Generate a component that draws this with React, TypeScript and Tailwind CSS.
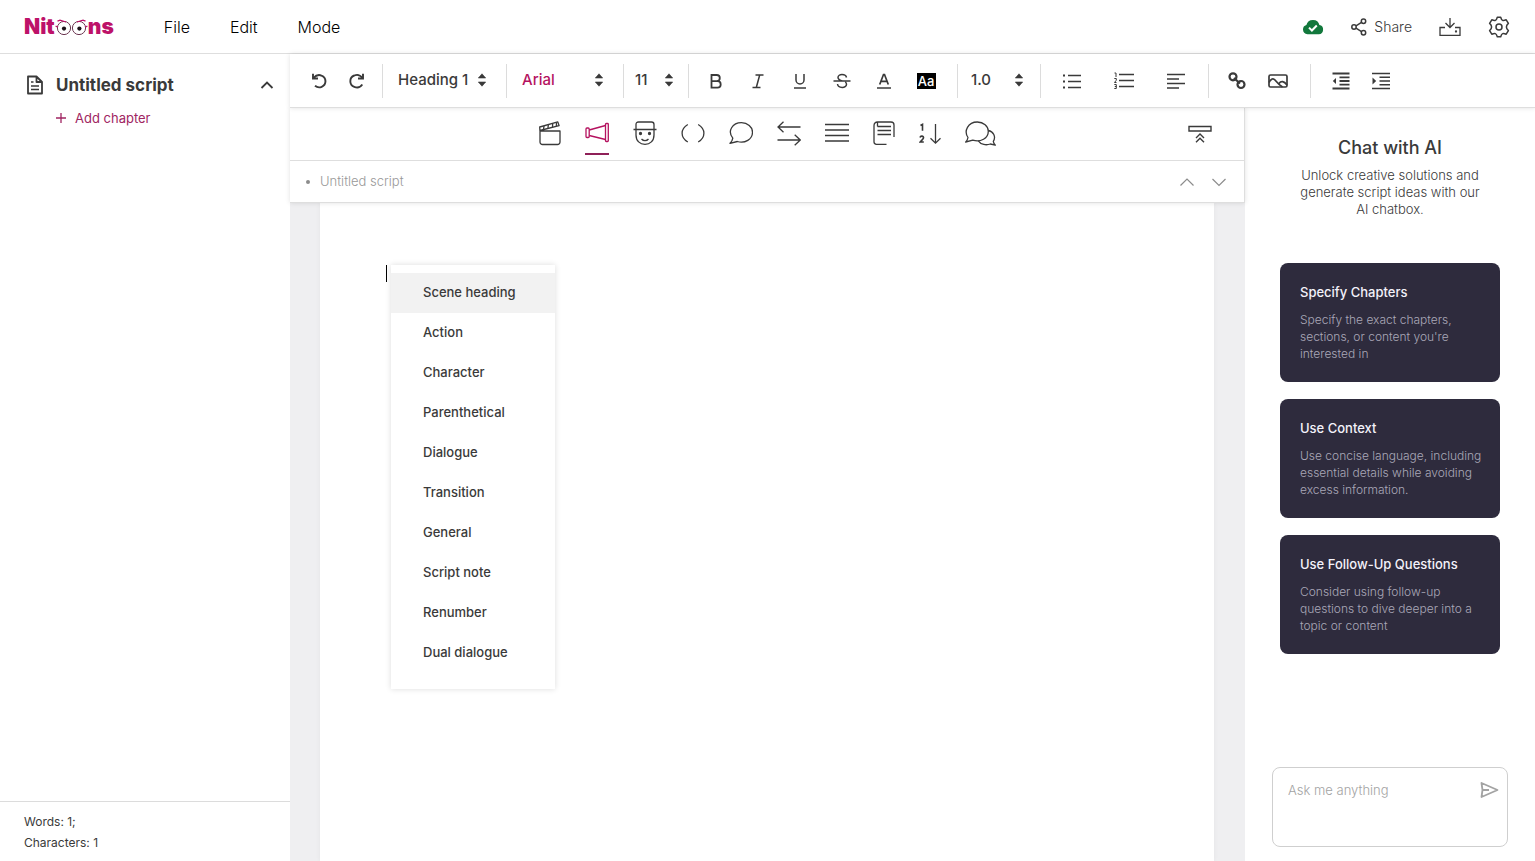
import React, { useState } from 'react';

interface IconProps {
    w: number;
    h: number;
    stroke?: number;
    children: React.ReactNode;
}

const Icon: React.FC<IconProps> = ({ w, h, stroke = 1.5, children }) => (
    <svg
        width={w}
        height={h}
        viewBox={`0 0 ${w} ${h}`}
        fill="none"
        stroke="currentColor"
        strokeWidth={stroke}
        className="shrink-0"
        aria-hidden="true"
    >
        {children}
    </svg>
);

const Logo: React.FC = () => (
    <a href="#" aria-label="Nitoons" className="flex items-center text-[21px] leading-6 font-black text-[#bd1269]">
        <span>Nit</span>
        <svg width="33" height="18" viewBox="0 0 33 18" fill="none" aria-hidden="true">
            <circle cx="9" cy="10" r="6.6" fill="#fff" stroke="#6b3550" strokeWidth="1" />
            <circle cx="24" cy="10" r="6.6" fill="#fff" stroke="#6b3550" strokeWidth="1" />
            <circle cx="9" cy="10.6" r="2.1" fill="#1c1118" />
            <circle cx="24.4" cy="10.6" r="2.1" fill="#1c1118" />
            <path d="M2.5 3.2 5 2.2l6 1.8M22 4l6-1.8 2.500 1M.6 8l2.200 1.200M32.400 8l-2.200 1.200" stroke="#bd1269" strokeWidth="1.3" />
        </svg>
        <span>ns</span>
    </a>
);

interface PickerProps {
    label: string;
    value: string;
    options: string[];
    className: string;
    arrows: string;
}

const Picker: React.FC<PickerProps> = ({ label, value, options, className, arrows }) => (
    <div className="relative h-[34px] border-r border-[#dcdcdc]">
        <select
            aria-label={label}
            defaultValue={value}
            className={`h-[34px] appearance-none bg-transparent text-[15px] font-medium outline-none ${className}`}
        >
            {options.map((option) => (
                <option key={option}>{option}</option>
            ))}
        </select>
        <svg
            width="10"
            height="14"
            viewBox="0 0 10 14"
            fill="currentColor"
            className={`pointer-events-none absolute top-[9px] ${arrows}`}
            aria-hidden="true"
        >
            <path d="M5 .8 8.7 5H1.3ZM5 13.2 8.7 9H1.3Z" stroke="currentColor" strokeWidth=".6" strokeLinejoin="round" />
        </svg>
    </div>
);

interface ToolProps {
    label: string;
    className: string;
    children: React.ReactNode;
}

const Tool: React.FC<ToolProps> = ({ label, className, children }) => (
    <button type="button" aria-label={label} className={`flex h-[34px] items-center justify-center ${className}`}>
        {children}
    </button>
);

const Header: React.FC = () => (
    <header className="flex h-[54px] shrink-0 items-center justify-between border-b border-[#dedede] pr-[25px] pl-6">
        <div className="flex items-center">
            <Logo />
            <nav className="ml-[50px] flex gap-10 text-base font-light text-black">
                <button type="button">File</button>
                <button type="button">Edit</button>
                <button type="button">Mode</button>
            </nav>
        </div>
        <div className="flex items-center gap-[27px]">
            <svg width="22" height="16" viewBox="0 0 22 16" role="img" aria-label="Saved">
                <path
                    d="M5.5 15.2A4.8 4.8 0 0 1 1 10.6a4.6 4.6 0 0 1 3.4-4.5A6.7 6.7 0 0 1 11 .9a6.5 6.5 0 0 1 6.4 5.2 4.6 4.6 0 0 1-.6 9.1Z"
                    fill="#12783c"
                />
                <path d="m7 8.6 2.9 2.9 4.9-5" fill="none" stroke="#fff" strokeWidth="2" />
            </svg>
            <button type="button" className="flex items-center gap-[7px] text-sm font-light">
                <Icon w={16} h={18}>
                    <circle cx="12.5" cy="3.2" r="2.2" />
                    <circle cx="3" cy="9" r="2.2" />
                    <circle cx="12.5" cy="14.8" r="2.2" />
                    <path d="m5 7.8 5.5-3.4M5 10.2l5.5 3.4" />
                </Icon>
                Share
            </button>
            <button type="button" aria-label="Download">
                <Icon w={22} h={20} stroke={1.3}>
                    <path d="M11 1v9.5M6.5 6 11 10.5 15.500 6M6 10.5H1v7.8h20v-7.8h-5" />
                    <circle cx="17" cy="14.5" r=".5" fill="currentColor" />
                </Icon>
            </button>
            <button type="button" aria-label="Settings">
                <Icon w={22} h={22} stroke={1.5}>
                    <path
                        d="M9.300 1.200h3.400q.8 2.800 1.900 3.200 1.100.5 3.600-.6l2.200 3.600q-2 1.600-2 3.600t2 3.600l-2.200 3.600q-2.500-1.100-3.600-.6-1.100.4-1.900 3.200H9.300q-.8-2.800-1.900-3.200-1.100-.5-3.600.6l-2.200-3.600q2-1.600 2-3.600t-2-3.600l2.200-3.600q2.500 1.100 3.600.6 1.100-.4 1.900-3.200Z"
                        strokeLinejoin="round"
                    />
                    <circle cx="11" cy="11" r="3" />
                </Icon>
            </button>
        </div>
    </header>
);

const Sidebar: React.FC = () => (
    <aside className="flex w-[290px] shrink-0 flex-col">
        <div className="flex items-center pt-[19px] pr-4 pl-[27px]">
            <Icon w={16} h={20} stroke={1.8}>
                <path d="M1 1.5h8.5L15 7v11.5H1ZM9.500 1.5V7H15" strokeLinejoin="round" />
                <path d="M4 7h2.5M4 11h8M4 14.5h8" strokeWidth="1.5" />
            </Icon>
            <h2 className="ml-[13px] text-[17px] leading-6 font-bold">Untitled script</h2>
            <button type="button" aria-label="Collapse script" className="ml-auto">
                <Icon w={14} h={10} stroke={1.8}>
                    <path d="m1.5 8 5.5-5.5L12.5 8" />
                </Icon>
            </button>
        </div>
        <button type="button" className="mt-[11px] ml-14 flex items-center gap-[9px] self-start text-[13px] leading-5 text-[#a02562]">
            <Icon w={10} h={10} stroke={1.3}>
                <path d="M5 0v10M0 5h10" />
            </Icon>
            Add chapter
        </button>
        <div className="mt-auto border-t border-[#dcdcdc] pt-[9px] pb-2 pl-6 text-xs leading-[21px]">
            <p>Words: 1;</p>
            <p>Characters: 1</p>
        </div>
    </aside>
);

const Toolbar: React.FC = () => (
    <div className="relative z-10 flex h-[54px] shrink-0 items-center border-b border-[#dedede] bg-white shadow-[0_0_5px_rgba(0,0,0,0.12)]">
        <div className="flex gap-0.5 border-r border-[#dcdcdc] pr-[7px] pl-[11px]">
            <Tool label="Undo" className="w-9">
                <Icon w={16} h={16} stroke={1.9}>
                    <path d="M2 .8v4.7h5" />
                    <path d="M2.5 5C5 2.2 8 1.5 10.5 2.6a6 6 0 0 1 .2 11.2c-2 .9-4.5.8-6.7-1" />
                </Icon>
            </Tool>
            <Tool label="Redo" className="w-9">
                <Icon w={16} h={16} stroke={1.9}>
                    <path d="M14 .8v4.7H9" />
                    <path d="M13.5 5C11 1.8 8 1.3 5.3 2.5a6 6 0 0 0 0 11.3c3 1.3 6.2.2 8-2.3" />
                </Icon>
            </Tool>
        </div>
        <Picker label="Text style" value="Heading 1" options={['Heading 1', 'Heading 2', 'Normal']} className="w-[123px] pl-[15px]" arrows="right-[19px]" />
        <Picker label="Font" value="Arial" options={['Arial', 'Courier']} className="w-[116px] pl-[15px] text-[#b5125f]" arrows="right-[19px]" />
        <Picker label="Font size" value="11" options={['11', '12', '14']} className="w-16 pl-[11px]" arrows="right-3.5" />
        <div className="flex border-r border-[#dcdcdc] pr-2.5 pl-1.5">
            <Tool label="Bold" className="w-[42px]">
                <Icon w={16} h={16} stroke={1.8}>
                    <path d="M3.5 2h5.2a3 3 0 0 1 0 6.2H3.5ZM3.500 8.2h6a3.200 3.200 0 0 1 0 6.400h-6Z" />
                </Icon>
            </Tool>
            <Tool label="Italic" className="w-[42px]">
                <Icon w={16} h={16}>
                    <path d="M5.5 2h8M2.500 14.5h8M9.700 2 6.300 14.5" />
                </Icon>
            </Tool>
            <Tool label="Underline" className="w-[42px]">
                <Icon w={16} h={16}>
                    <path d="M4 1v6a4 4 0 0 0 8 0V1M2 15h12" />
                </Icon>
            </Tool>
            <Tool label="Strikethrough" className="w-[42px]">
                <Icon w={18} h={16}>
                    <path d="M13.5 4.5C12.8.5 5 .5 5 4.5c0 2.2 2.5 2.9 4.5 3.4M4.500 11c.5 4.500 9 4.500 9 .3 0-1-.5-1.700-1.200-2.300M.5 8h17" />
                </Icon>
            </Tool>
            <Tool label="Text colour" className="w-[42px]">
                <Icon w={16} h={16}>
                    <path d="M3.7 11.5 7.5 1.5h1l3.8 10M5 8.3h6" strokeWidth="1.7" />
                    <path d="M1 15h14" />
                </Icon>
            </Tool>
            <Tool label="Highlight" className="w-[42px]">
                <span className="flex h-4 w-[19px] items-center justify-center bg-black text-[13px] leading-4 font-medium text-white">Aa</span>
            </Tool>
        </div>
        <Picker label="Line spacing" value="1.0" options={['1.0', '1.5', '2.0']} className="w-[82px] pl-[13px]" arrows="right-4" />
        <div className="flex border-r border-[#dcdcdc] pr-1.5 pl-[5px]">
            <Tool label="Bulleted list" className="w-13">
                <Icon w={18} h={16}>
                    <path d="M5 2.5h13M5 8.5h13M5 14.5h13" />
                    <path d="M0 2.5h2M0 8.5h2M0 14.5h2" strokeWidth="2" />
                </Icon>
            </Tool>
            <Tool label="Numbered list" className="w-13">
                <Icon w={20} h={18}>
                    <path d="M5 2.5h15M5 8.5h15M5 14.5h15" />
                    <path d="M.5 1H2v4M.3 6.500h2v1.700L.5 10.500h2M.3 12.500h2v4h-2M.8 14.500h1.500" strokeWidth="1" />
                </Icon>
            </Tool>
            <Tool label="Align left" className="w-13">
                <Icon w={18} h={16}>
                    <path d="M0 1.5h18M0 6h12M0 10.500h18M0 15h12" />
                </Icon>
            </Tool>
        </div>
        <div className="flex border-r border-[#dcdcdc] pr-3 pl-[7px]">
            <Tool label="Insert link" className="w-[41px]">
                <Icon w={18} h={18} stroke={2.2}>
                    <circle cx="5" cy="4.8" r="3.500" />
                    <circle cx="13" cy="12.500" r="3.500" />
                    <path d="m6 6 6 5.500" />
                </Icon>
            </Tool>
            <Tool label="Insert image" className="w-[41px]">
                <Icon w={20} h={14} stroke={1.7}>
                    <rect x="1" y="1" width="18" height="12" rx="1.5" />
                    <path d="M1 8.500C3.200 4.500 5.200 3.800 7 6c1.800 2.200 3.500 4.500 7.500 7M11 9.500c2-2.800 5-2.500 8 1.500" />
                </Icon>
            </Tool>
        </div>
        <div className="flex pl-2.5">
            <Tool label="Decrease indent" className="w-10">
                <Icon w={18} h={18} stroke={1.8}>
                    <path d="M.5 1.5h17M7.500 5.300h10M7.500 9h10M7.500 12.700h10M.5 16.500h17" />
                    <path d="M4 6 .8 9 4 12Z" fill="currentColor" stroke="none" />
                </Icon>
            </Tool>
            <Tool label="Increase indent" className="w-10">
                <Icon w={18} h={18} stroke={1.6}>
                    <path d="M0 1.5h18M7.500 5.300H18M7.500 9H18M7.500 12.700H18M0 16.500h18" />
                    <path d="m.5 5.500 3.700 3.500L.5 12.500Z" fill="currentColor" stroke="none" />
                </Icon>
            </Tool>
        </div>
    </div>
);

const elements = [
    {
        name: 'Scene heading',
        w: 22,
        art: (
            <>
                <path d="M1 10h20v11a2.5 2.5 0 0 1-2.5 2.5h-15A2.5 2.5 0 0 1 1 21ZM.9 9.500.7 6 18.8.9l1.300 3.700Z" strokeLinejoin="round" />
                <path d="m5 5-.5 3.300M9.300 3.800 9 7.200M13.700 2.600l-.2 3.500M17.500 1.600l-.1 3.500" />
            </>
        ),
    },
    {
        name: 'Action',
        w: 24,
        art: (
            <>
                <rect x="1" y="7" width="3.2" height="9.5" rx="1" />
                <rect x="20.5" y="2.5" width="2.8" height="18" rx=".8" />
                <path d="M4.2 9 20.500 4.500M4.200 14.500 20.500 18.500" />
            </>
        ),
    },
    {
        name: 'Character',
        w: 24,
        art: (
            <>
                <path d="M.5 8.5h23M3 8V3.500Q3 1 5.500 1h13Q21 1 21 3.500V8M3 8.500V14c0 6 4 9.300 9 9.300s9-3.300 9-9.300V8.500" />
                <circle cx="7.5" cy="12.5" r="1" fill="currentColor" />
                <circle cx="16.5" cy="12.5" r="1" fill="currentColor" />
                <path d="M8.5 18c2 2.200 5 2.200 7 0" />
            </>
        ),
    },
    {
        name: 'Parenthetical',
        w: 24,
        art: <path d="M6.8 3.5C-.8 8-.8 16.500 6.800 21M17.200 3.500c7.600 4.500 7.600 13 0 17.500" />,
    },
    {
        name: 'Dialogue',
        w: 24,
        art: (
            <path d="M3.8 17.2C-2 10 3.500 1.700 12.500 1.700c6 0 11 4.300 11 9.500 0 7-7.500 11.700-15.200 9.300L1 22.300c1.700-1.500 2.500-3 2.800-5.100Z" strokeLinejoin="round" />
        ),
    },
    {
        name: 'Transition',
        w: 24,
        art: <path d="M23.5 6H1M6.500.8 1 6l5.500 5.200M.5 19h22.800M17.700 13.800 23.300 19l-5.600 5.200" />,
    },
    {
        name: 'General',
        w: 24,
        art: <path d="M0 3.5h24M0 9h24M0 14.500h24M0 20h24" />,
    },
    {
        name: 'Script note',
        w: 22,
        art: (
            <path d="M13.500 23.300H3.500A2.500 2.500 0 0 1 1 20.800V4.700Q1 1 4.700 1H18q3 0 3 3v12M4.500 1.200v4.300M4.500 5.500h13.500M4.500 9.500h13.500M4.500 13.500h13.500" />
        ),
    },
    {
        name: 'Renumber',
        w: 22,
        art: (
            <>
                <path d="M16.5 3v19M11.500 17.200l5 5 5-5" />
                <path d="M1.500 4.500 3.500 3.300v6.500M1 16.500c.5-2 3.700-1.800 3.500.3-.2 1.400-2 2.500-3.300 4.200h3.600" strokeWidth="1.6" />
            </>
        ),
    },
    {
        name: 'Dual dialogue',
        w: 31,
        art: (
            <>
                <path d="M3 16.5C-1.500 10 3 1 12.300 1c6.200 0 11 4 11 9.200 0 7-7.500 11.400-15.500 9L.7 21c1.300-1.300 2-2.800 2.300-4.500Z" strokeLinejoin="round" />
                <path d="M23.3 9.500c5 .8 8 6.500 5 10.800.2 1.500.8 2.500 2 3.900l-5-1.200c-4 1.500-9.300.8-12-3.200" strokeLinejoin="round" />
            </>
        ),
    },
];

const ElementBar: React.FC = () => {
    const [active, setActive] = useState('Action');

    return (
        <div className="grid h-[53px] shrink-0 grid-cols-[1fr_auto_1fr] border-r border-b border-[#dedede] pt-[13px]">
            <span />
            <div className="flex items-start gap-6">
                {elements.map(({ name, w, art }) => (
                    <button
                        key={name}
                        type="button"
                        aria-label={name}
                        onClick={() => setActive(name)}
                        className={`border-b-2 pb-[7px] ${active === name ? 'border-[#8f2058] text-[#b5125f]' : 'border-transparent'}`}
                    >
                        <Icon w={w} h={25} stroke={1.3}>
                            {art}
                        </Icon>
                    </button>
                ))}
            </div>
            <button type="button" aria-label="Collapse toolbar" className="mr-8 self-start justify-self-end pt-1">
                <Icon w={24} h={18} stroke={1.4}>
                    <path d="M1 1.5h22V6H1ZM8 13l4-4 4 4M8 17.300l4-4 4 4" />
                </Icon>
            </button>
        </div>
    );
};

const Editor: React.FC = () => (
    <main className="flex min-w-0 flex-1 flex-col bg-[#efeff1]">
        <div className="relative z-[1] flex flex-col bg-white shadow-[0_0_5px_rgba(0,0,0,0.12)]">
            <ElementBar />
            <div className="flex h-[42px] items-center border-r border-b border-[#dedede] pr-[18px] pl-4">
                <span className="size-1 rounded-full bg-[#8c8c8c]" />
                <span className="ml-2.5 text-[13px] font-light text-[#999]">Untitled script</span>
                <div className="ml-auto flex gap-[18px] text-[#8c8c8c]">
                    <button type="button" aria-label="Previous">
                        <Icon w={14} h={10} stroke={1.2}>
                            <path d="M.5 8.5 7 2l6.500 6.500" />
                        </Icon>
                    </button>
                    <button type="button" aria-label="Next">
                        <Icon w={14} h={10} stroke={1.2}>
                            <path d="M.5 2 7 8.500 13.500 2" />
                        </Icon>
                    </button>
                </div>
            </div>
        </div>
        <div className="mr-[31px] ml-[30px] flex-1 bg-white px-[66px] pt-[62px] shadow-[0_0_5px_rgba(0,0,0,0.05)]">
            <div className="relative">
                <div className="h-[17px] w-px bg-black" />
                <ul className="absolute top-0 left-[5px] w-[164px] bg-white pt-2 pb-4 shadow-[0_0_6px_rgba(0,0,0,0.14)]">
                    {elements.map(({ name }, i) => (
                        <li key={name}>
                            <button
                                type="button"
                                className={`h-10 w-full pl-8 text-left text-[13px] font-medium ${i === 0 ? 'bg-[#f2f2f2]' : ''}`}
                            >
                                {name}
                            </button>
                        </li>
                    ))}
                </ul>
            </div>
        </div>
    </main>
);

const tips = [
    { title: 'Specify Chapters', text: "Specify the exact chapters, sections, or content you're interested in" },
    { title: 'Use Context', text: 'Use concise language, including essential details while avoiding excess information.' },
    { title: 'Use Follow-Up Questions', text: 'Consider using follow-up questions to dive deeper into a topic or content' },
];

const ChatPanel: React.FC = () => (
    <aside className="flex w-[290px] shrink-0 flex-col px-[27px] pt-7 pb-3.5">
        <h2 className="text-center text-lg leading-6 font-medium">Chat with AI</h2>
        <p className="mt-[7px] px-6 text-center text-[13px] leading-[17px] font-light">
            Unlock creative solutions and generate script ideas with our AI chatbox.
        </p>
        <div className="mt-[45px] flex flex-col gap-[17px] px-2">
            {tips.map(({ title, text }) => (
                <div key={title} className="rounded-lg bg-[#2e2b3d] py-5 pr-2 pl-5">
                    <h3 className="text-[13px] leading-[18px] font-medium text-[#f4f2fa]">{title}</h3>
                    <p className="mt-2.5 text-xs leading-[17px] font-light text-[#aaa8b8]">{text}</p>
                </div>
            ))}
        </div>
        <div className="mt-auto flex h-20 items-start rounded-lg border border-[#cfcfcf] pt-3 pr-2 pl-[15px]">
            <textarea
                aria-label="Ask me anything"
                placeholder="Ask me anything"
                className="h-14 min-w-0 flex-1 resize-none text-[13px] leading-[21px] font-light outline-none placeholder:text-[#a3a3a3]"
            />
            <button type="button" aria-label="Send" className="pt-px text-[#a3a3a3]">
                <Icon w={19} h={18} stroke={1.8}>
                    <path d="M1.5 2 17.500 9l-16 7 1-7ZM2.500 9H9" strokeLinejoin="round" />
                </Icon>
            </button>
        </div>
    </aside>
);

const App: React.FC = () => (
    <div className="flex h-screen flex-col overflow-hidden bg-white font-[Inter,sans-serif] text-[#3a3a3a]">
        <Header />
        <div className="flex min-h-0 flex-1">
            <Sidebar />
            <div className="flex min-w-0 flex-1 flex-col">
                <Toolbar />
                <div className="flex min-h-0 flex-1">
                    <Editor />
                    <ChatPanel />
                </div>
            </div>
        </div>
    </div>
);

export default App;
